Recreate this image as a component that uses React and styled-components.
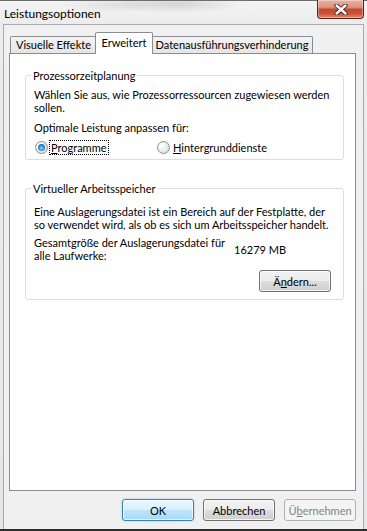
import React from 'react';
import styled, { createGlobalStyle } from 'styled-components';

const Global = createGlobalStyle`
  html, body { margin: 0; padding: 0; background: #ffffff; }
  body {
    font-family: Lato, "Noto Sans", sans-serif;
    font-size: 11px;
    color: #000;
  }
  * { box-sizing: border-box; }
`;

const Window = styled.div`
  width: 367px;
  height: 531px;
  display: flex;
  flex-direction: column;
  background: linear-gradient(to bottom, #ececec, #e4e6e8);
  border-bottom: 2px solid #2c2c2c;
  white-space: nowrap;
`;

const TitleBar = styled.div`
  height: 24px;
  flex: none;
  display: flex;
  align-items: flex-start;
  justify-content: space-between;
  border-top: 1px solid #6e6e6e;
  background:
    radial-gradient(ellipse 70px 9px at 175px 3px, rgba(0,0,0,0.13), transparent),
    radial-gradient(ellipse 50px 8px at 110px 4px, rgba(0,0,0,0.07), transparent),
    linear-gradient(to bottom, #f4f4f4, #ececec);
`;

const TitleText = styled.div`
  font-size: 12px;
  line-height: 16px;
  padding: 5px 0 0 4px;
  color: #000;
`;

const CloseButton = styled.div`
  width: 47px;
  height: 19px;
  margin-right: 3px;
  margin-top: -1px;
  border: 1px solid #5c2018;
  border-top: none;
  border-radius: 0 0 4px 4px;
  display: flex;
  align-items: center;
  justify-content: center;
  background: linear-gradient(to bottom, #eab2a4 0%, #de9380 40%, #c64a32 52%, #cc4f37 75%, #e38a70 100%);
  box-shadow: inset 0 0 0 1px rgba(255,255,255,0.35);
`;

const Body = styled.div`
  flex: 1;
  margin: 0 3px;
  border: 1px solid #a9abae;
  border-bottom: none;
  background: #f0f0f0;
  padding: 7px 7px 8px 5px;
  display: flex;
  flex-direction: column;
`;

const TabRow = styled.div`
  display: flex;
  align-items: flex-end;
  height: 22px;
  margin-left: 1px;
  flex: none;
`;

const Tab = styled.div`
  width: ${p => p.$w}px;
  height: ${p => (p.$active ? 22 : 18)}px;
  border: 1px solid #898c95;
  border-bottom: none;
  border-radius: 2px 2px 0 0;
  background: ${p => (p.$active ? '#ffffff' : 'linear-gradient(to bottom, #f4f4f4, #e4e4e4)')};
  margin: ${p => (p.$active ? '0 -2px' : '0')};
  position: ${p => (p.$active ? 'relative' : 'static')};
  z-index: ${p => (p.$active ? 1 : 'auto')};
  text-align: center;
  line-height: 16px;
  padding-top: ${p => (p.$active ? 2 : 0)}px;
`;

const Panel = styled.div`
  flex: 1;
  margin-top: -1px;
  background: #ffffff;
  border: 1px solid #898c95;
  padding: 15px 11px 0 15px;
  display: flex;
  flex-direction: column;
`;

const GroupBox = styled.fieldset`
  margin: ${p => p.$mt || 0}px 0 0 0;
  border: 1px solid #d5dfe5;
  border-radius: 3px;
  padding: 0 8px ${p => p.$pb}px 8px;
  min-width: 0;
  display: flex;
  flex-direction: column;
`;

const Legend = styled.legend`
  padding: 0 2px;
  margin-left: -3px;
  line-height: 13px;
`;

const Para = styled.p`
  margin: ${p => p.$mt}px 0 0 0;
  line-height: 13px;
`;

const RadioRow = styled.div`
  margin-top: 7px;
  margin-left: 1px;
  display: grid;
  grid-template-columns: 122px auto;
  line-height: 13px;
`;

const RadioOption = styled.label`
  display: flex;
  align-items: center;
  gap: 2px;
`;

const RadioCircle = styled.span`
  width: 13px;
  height: 13px;
  border-radius: 50%;
  border: 1px solid #8e8f8f;
  background: radial-gradient(circle at 35% 35%, #ffffff 0%, #eef0f2 40%, #cfd3d8 100%);
  display: flex;
  align-items: center;
  justify-content: center;
  flex: none;
  &::after {
    content: '';
    display: ${p => (p.$checked ? 'block' : 'none')};
    width: 7px;
    height: 7px;
    border-radius: 50%;
    background: radial-gradient(circle at 50% 60%, #8be0ff 0%, #3a9ee0 40%, #124f8e 85%, #0c3a6e 100%);
  }
`;

const RadioLabel = styled.span`
  outline: ${p => (p.$focus ? '1px dotted #000' : 'none')};
  padding: 0 1px;
  line-height: 13px;
`;

const InfoRow = styled.div`
  margin-top: 5px;
  display: grid;
  grid-template-columns: 200px auto;
  align-items: center;
  line-height: 13px;
`;

const ButtonRight = styled.div`
  display: flex;
  justify-content: flex-end;
  margin-top: ${p => p.$mt || 0}px;
  margin-right: ${p => p.$mr || 0}px;
  gap: 9px;
`;

const Button = styled.div`
  width: ${p => p.$w || 72}px;
  height: 22px;
  border-radius: 3px;
  display: flex;
  align-items: center;
  justify-content: center;
  font-size: 11px;
  border: 1px solid ${p => (p.$variant === 'default' ? '#3c7fb1' : p.$variant === 'disabled' ? '#adb2b5' : '#707070')};
  color: ${p => (p.$variant === 'disabled' ? '#838383' : '#000')};
  background: ${p =>
    p.$variant === 'default'
      ? 'linear-gradient(to bottom, #eaf6fd 0%, #d9f0fc 50%, #bee6fd 50%, #a7d9f5 100%)'
      : p.$variant === 'disabled'
      ? '#f4f4f4'
      : 'linear-gradient(to bottom, #f2f2f2 0%, #ebebeb 50%, #dddddd 50%, #cfcfcf 100%)'};
  box-shadow: ${p =>
    p.$variant === 'disabled'
      ? 'none'
      : p.$variant === 'default'
      ? 'inset 0 0 0 1px rgba(255,255,255,0.7), 0 0 2px rgba(60,160,230,0.5)'
      : 'inset 0 0 0 1px rgba(255,255,255,0.75)'};
`;

const Footer = styled.div`
  display: flex;
  justify-content: flex-end;
  gap: 9px;
  margin-top: 8px;
  flex: none;
`;

function CloseGlyph() {
  return (
    <svg width="14" height="11" viewBox="0 0 14 11">
      <path d="M2.5 1.5 L11.5 9.5 M11.5 1.5 L2.5 9.5" stroke="#3a1a14" strokeWidth="4.2" strokeLinecap="round" />
      <path d="M2.5 1.5 L11.5 9.5 M11.5 1.5 L2.5 9.5" stroke="#ffffff" strokeWidth="2.4" strokeLinecap="round" />
    </svg>
  );
}

export default function App() {
  return (
    <>
      <Global />
      <Window>
        <TitleBar>
          <TitleText>Leistungsoptionen</TitleText>
          <CloseButton>
            <CloseGlyph />
          </CloseButton>
        </TitleBar>
        <Body>
          <TabRow>
            <Tab $w={87}>Visuelle Effekte</Tab>
            <Tab $w={58} $active>Erweitert</Tab>
            <Tab $w={162}>Datenausführungsverhinderung</Tab>
          </TabRow>
          <Panel>
            <GroupBox $pb={5}>
              <Legend>Prozessorzeitplanung</Legend>
              <Para $mt={6}>
                Wählen Sie aus, wie Prozessorressourcen zugewiesen werden
                <br />
                sollen.
              </Para>
              <Para $mt={7}>Optimale Leistung anpassen für:</Para>
              <RadioRow>
                <RadioOption>
                  <RadioCircle $checked />
                  <RadioLabel $focus>
                    <u>P</u>rogramme
                  </RadioLabel>
                </RadioOption>
                <RadioOption>
                  <RadioCircle />
                  <RadioLabel>
                    <u>H</u>intergrunddienste
                  </RadioLabel>
                </RadioOption>
              </RadioRow>
            </GroupBox>
            <GroupBox $mt={22} $pb={7}>
              <Legend>Virtueller Arbeitsspeicher</Legend>
              <Para $mt={10}>
                Eine Auslagerungsdatei ist ein Bereich auf der Festplatte, der
                <br />
                so verwendet wird, als ob es sich um Arbeitsspeicher handelt.
              </Para>
              <InfoRow>
                <span>
                  Gesamtgröße der Auslagerungsdatei für
                  <br />
                  alle Laufwerke:
                </span>
                <span>16279 MB</span>
              </InfoRow>
              <ButtonRight $mt={8} $mr={4}>
                <Button $w={72}>
                  Ä<u>n</u>dern...
                </Button>
              </ButtonRight>
            </GroupBox>
          </Panel>
          <Footer>
            <Button $variant="default">OK</Button>
            <Button>Abbrechen</Button>
            <Button $variant="disabled">
              Ü<u>b</u>ernehmen
            </Button>
          </Footer>
        </Body>
      </Window>
    </>
  );
}
